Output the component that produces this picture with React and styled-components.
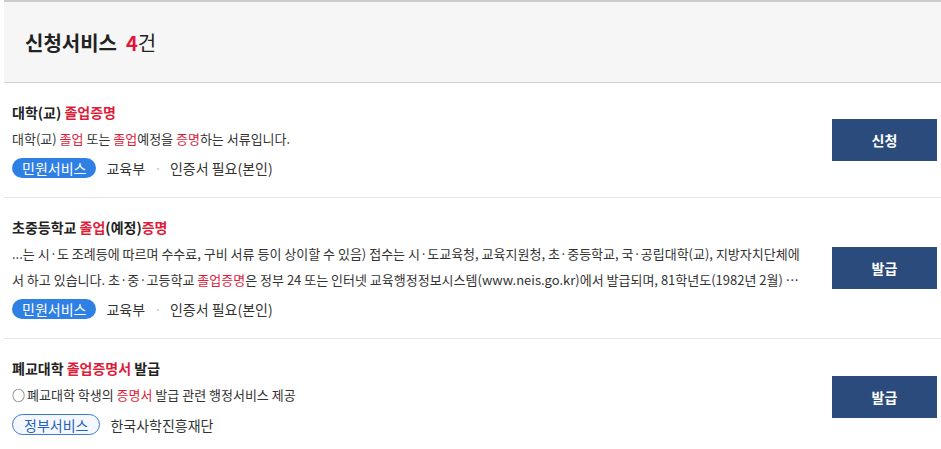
import React from "react";
import styled, { createGlobalStyle, css } from "styled-components";

const GlobalStyle = createGlobalStyle`
  body {
    margin: 0;
    background: #fff;
    font-family: "Noto Sans CJK KR", "Noto Sans", sans-serif;
    color: #333;
  }
`;

const Page = styled.div`
  padding-left: 4px;
`;

const Header = styled.div`
  display: flex;
  align-items: center;
  height: 80px;
  padding-left: 21px;
  background: #f6f6f6;
  border-top: 2px solid #cbcbcb;
  border-bottom: 1px solid #d2d2d2;
`;

const HeaderTitle = styled.h2`
  margin: 0;
  font-size: 20px;
  font-weight: 700;
  color: #222;
`;

const Count = styled.span`
  margin-left: 9px;
  font-weight: 400;
  b {
    color: #e0173d;
    font-weight: 700;
  }
`;

const Item = styled.div`
  display: flex;
  align-items: center;
  gap: 24px;
  padding: 19px 4px 19px 8px;
  border-bottom: 1px solid #e6e6e6;
`;

const ItemBody = styled.div`
  flex: 1;
  min-width: 0;
`;

const ItemTitle = styled.h3`
  margin: 0;
  font-size: 14px;
  line-height: 20px;
  font-weight: 700;
  color: #222;
`;

const Hl = styled.span`
  color: #dc1e3c;
`;

const Desc = styled.div`
  margin-top: 4px;
  font-size: 13px;
  line-height: 26px;
  color: #333;
`;

const DescLine = styled.div`
  white-space: nowrap;
  overflow: hidden;
  text-overflow: ellipsis;
`;

const Circle = styled.span`
  margin-right: 2px;
`;

const Meta = styled.div`
  display: flex;
  align-items: center;
  margin-top: 6px;
  font-size: 14px;
  color: #333;
`;

const Pill = styled.span`
  display: inline-flex;
  align-items: center;
  height: 20px;
  padding: 0 10px;
  border-radius: 11px;
  margin-right: 10px;
  font-size: 14px;
  ${(p) =>
    p.$outline
      ? css`
          height: 19px;
          padding: 0 11px;
          border: 1px solid #3a7ad6;
          background: #f4f8fe;
          color: #2461b7;
        `
      : css`
          background: #2f80e4;
          color: #fff;
        `}
`;

const Dot = styled.span`
  margin: 0 8px 0 9px;
  color: #c8c8c8;
`;

const ActionButton = styled.button`
  flex: none;
  width: 105px;
  height: 42px;
  border: 0;
  background: #2b4b7d;
  color: #fff;
  font-family: inherit;
  font-size: 14px;
  font-weight: 700;
  cursor: pointer;
`;

const items = [
  {
    title: (
      <>
        대학(교) <Hl>졸업증명</Hl>
      </>
    ),
    lines: [
      <>
        대학(교) <Hl>졸업</Hl> 또는 <Hl>졸업</Hl>예정을 <Hl>증명</Hl>하는 서류입니다.
      </>,
    ],
    pill: "민원서비스",
    meta: ["교육부", "인증서 필요(본인)"],
    action: "신청",
  },
  {
    title: (
      <>
        초중등학교 <Hl>졸업</Hl>(예정)<Hl>증명</Hl>
      </>
    ),
    lines: [
      <>
        ...는 시·도 조례등에 따르며 수수료, 구비 서류 등이 상이할 수 있음) 접수는
        시·도교육청, 교육지원청, 초·중등학교, 국·공립대학(교), 지방자치단체에
      </>,
      <>
        서 하고 있습니다. 초·중·고등학교 <Hl>졸업증명</Hl>은 정부 24 또는 인터넷
        교육행정정보시스템(www.neis.go.kr)에서 발급되며, 81학년도(1982년 2월) …
      </>,
    ],
    pill: "민원서비스",
    meta: ["교육부", "인증서 필요(본인)"],
    action: "발급",
  },
  {
    title: (
      <>
        폐교대학 <Hl>졸업증명서</Hl> 발급
      </>
    ),
    lines: [
      <>
        <Circle>○</Circle>폐교대학 학생의 <Hl>증명서</Hl> 발급 관련 행정서비스 제공
      </>,
    ],
    pill: "정부서비스",
    outline: true,
    meta: ["한국사학진흥재단"],
    action: "발급",
  },
];

function App() {
  return (
    <>
      <GlobalStyle />
      <Page>
        <Header>
          <HeaderTitle>
            신청서비스
            <Count>
              <b>4</b>건
            </Count>
          </HeaderTitle>
        </Header>
        {items.map((item, i) => (
          <Item key={i}>
            <ItemBody>
              <ItemTitle>{item.title}</ItemTitle>
              <Desc>
                {item.lines.map((line, j) => (
                  <DescLine key={j}>{line}</DescLine>
                ))}
              </Desc>
              <Meta>
                <Pill $outline={item.outline}>{item.pill}</Pill>
                {item.meta.map((m, j) => (
                  <React.Fragment key={j}>
                    {j > 0 && <Dot>·</Dot>}
                    <span>{m}</span>
                  </React.Fragment>
                ))}
              </Meta>
            </ItemBody>
            <ActionButton>{item.action}</ActionButton>
          </Item>
        ))}
      </Page>
    </>
  );
}

export default App;
